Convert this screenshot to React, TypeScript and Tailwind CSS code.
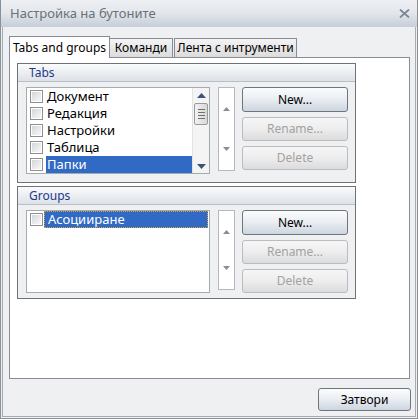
import React from "react";

const font = { fontFamily: '"Noto Sans", "Open Sans", sans-serif' };

function Check() {
  return (
    <span className="flex h-[13px] w-[13px] shrink-0 items-center justify-center border border-[#8f8f8f] bg-white">
      <span className="h-[9px] w-[9px] bg-gradient-to-br from-[#d4d6d9] to-[#f7f8f9]" />
    </span>
  );
}

function Btn({ label, disabled }: { label: string; disabled?: boolean }) {
  return (
    <div
      className={
        disabled
          ? "flex h-[24px] w-[106px] items-center justify-center rounded-[3px] border border-[#b9bcc0] bg-gradient-to-b from-[#f6f6f6] via-[#ededed] to-[#dcdcdc] text-[12px] text-[#a2a2a2]"
          : "flex h-[25px] w-[106px] items-center justify-center rounded-[3px] border border-[#70757c] bg-gradient-to-b from-[#fbfcfd] via-[#e9edf2] to-[#cdd5df] text-[12px] text-black"
      }
    >
      {label}
    </div>
  );
}

function Spinner({ h }: { h: number }) {
  return (
    <div
      className="flex w-[17px] flex-col items-center justify-between border border-[#b5b9be] bg-white py-[19px]"
      style={{ height: h }}
    >
      <svg width="7" height="4" viewBox="0 0 7 4">
        <path d="M0 4 L3.5 0 L7 4 Z" fill="#8a8d91" />
      </svg>
      <svg width="7" height="4" viewBox="0 0 7 4">
        <path d="M0 0 L3.5 4 L7 0 Z" fill="#8a8d91" />
      </svg>
    </div>
  );
}

function Group({
  title,
  height,
  listH,
  children,
}: {
  title: string;
  height: number;
  listH: number;
  children: React.ReactNode;
}) {
  return (
    <div className="w-[339px] border border-[#6f7378] bg-[#eef0f2]" style={{ height }}>
      <div className="flex h-[18px] items-center border-b border-[#b8bec6] bg-gradient-to-b from-[#fafbfc] to-[#dde2e8] pl-[11px] text-[12px] text-[#1b3a8c]">
        {title}
      </div>
      <div className="flex items-start pl-[8px] pt-[5px]">
        <div
          className="relative w-[184px] border border-[#a3aab2] bg-white"
          style={{ height: listH }}
        >
          {children}
        </div>
        <div className="ml-[8px]">
          <Spinner h={listH - 3} />
        </div>
        <div className="ml-[7px] flex flex-col gap-[5px]">
          <Btn label="New..." />
          <Btn label="Rename..." disabled />
          <Btn label="Delete" disabled />
        </div>
      </div>
    </div>
  );
}

const tabs = ["Документ", "Редакция", "Настройки", "Таблица", "Папки"];

export default function App() {
  return (
    <div className="flex h-[419px] w-[418px] flex-col overflow-hidden border border-t-0 border-[#8a9098] bg-[#eef0f2]" style={font}>
      <div className="flex h-[27px] shrink-0 items-center justify-between bg-gradient-to-b from-[#eef0f3] via-[#e2e6eb] to-[#c6cdd7] pl-[9px] pr-[7px]">
        <span className="text-[13px] text-[#6a7078]">Настройка на бутоните</span>
        <svg width="11" height="9" viewBox="0 0 11 9">
          <path d="M1 0.5 L10 8.5 M10 0.5 L1 8.5" stroke="#7c8796" strokeWidth="1.8" />
        </svg>
      </div>
      <div className="mx-[1px] mb-[1px] flex flex-1 flex-col border border-t-0 border-[#a5abb2] pl-[6px] pr-[5px] pt-[9px]">
        <div className="relative z-10 flex h-[22px] items-end">
          <div className="flex h-[22px] w-[101px] items-center justify-center border border-b-0 border-[#898c95] bg-white text-[12px] text-black">
            Tabs and groups
          </div>
          <div className="mb-[1px] flex h-[19px] w-[63px] items-center justify-center border border-b-0 border-l-0 border-[#898c95] bg-gradient-to-b from-[#f4f4f4] to-[#dcdcdc] text-[12px] text-black">
            Команди
          </div>
          <div className="mb-[1px] ml-[1px] flex h-[19px] w-[123px] items-center justify-center border border-b-0 border-[#898c95] bg-gradient-to-b from-[#f4f4f4] to-[#dcdcdc] text-[12px] text-black">
            Лента с интрументи
          </div>
        </div>
        <div className="-mt-[1px] flex h-[322px] flex-col gap-[3px] border border-[#898c95] bg-white pl-[7px] pt-[5px]">
          <Group title="Tabs" height={120} listH={87}>
            <div className="flex flex-col">
              {tabs.map((t, i) => (
                <div key={t} className="flex h-[17px] items-center pl-[3px]">
                  <Check />
                  <span
                    className={
                      i === 4
                        ? "ml-[3px] flex h-[17px] w-[147px] items-center bg-[#316ac5] pl-[1px] text-[13px] text-white"
                        : "ml-[3px] pl-[1px] text-[13px] text-black"
                    }
                  >
                    {t}
                  </span>
                </div>
              ))}
            </div>
            <div className="absolute right-0 top-0 flex h-full w-[17px] flex-col items-center border-l border-[#e3e3e3] bg-[#f4f4f4]">
              <svg className="mt-[5px]" width="9" height="5" viewBox="0 0 9 5">
                <path d="M0 5 L4.5 0 L9 5 Z" fill="#3e5378" />
              </svg>
              <div className="mt-[5px] flex h-[22px] w-[14px] flex-col items-center justify-center gap-[2px] rounded-[2px] border border-[#9a9a9a] bg-gradient-to-r from-[#f2f2f2] to-[#d8d8d8]">
                <span className="h-px w-[7px] bg-[#707070]" />
                <span className="h-px w-[7px] bg-[#707070]" />
                <span className="h-px w-[7px] bg-[#707070]" />
                <span className="h-px w-[7px] bg-[#707070]" />
              </div>
              <svg className="mt-auto mb-[4px]" width="9" height="5" viewBox="0 0 9 5">
                <path d="M0 0 L4.5 5 L9 0 Z" fill="#3e5378" />
              </svg>
            </div>
          </Group>
          <Group title="Groups" height={113} listH={83}>
            <div className="flex h-[17px] items-center pl-[3px]">
              <Check />
              <span className="ml-[1px] flex h-[17px] w-[164px] items-center border border-dotted border-[#e0a030] bg-[#316ac5] pl-[3px] text-[13px] text-white">
                Асоцииране
              </span>
            </div>
          </Group>
        </div>
        <div className="flex justify-end pt-[9px]">
          <div className="-mr-[1px] flex h-[23px] w-[93px] items-center justify-center rounded-[3px] border border-[#70757c] bg-gradient-to-b from-[#fbfcfd] via-[#e9edf2] to-[#cdd5df] text-[12px] text-black">
            Затвори
          </div>
        </div>
      </div>
    </div>
  );
}
